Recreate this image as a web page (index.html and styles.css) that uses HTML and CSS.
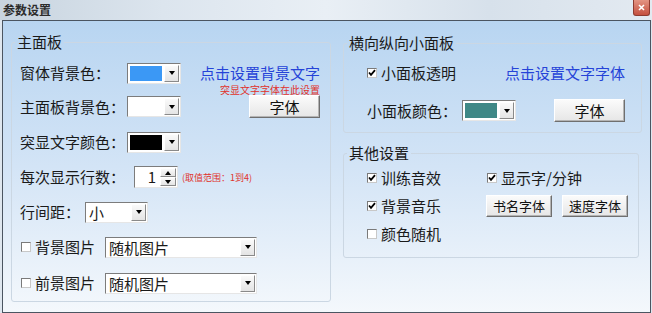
FILE: index.html
```html
<!DOCTYPE html>
<html lang="zh-CN">
<head>
  <meta charset="UTF-8">
  <title>参数设置</title>
  <link rel="stylesheet" href="styles.css">
</head>
<body>
  <div class="window">
    <div class="titlebar">
      <span class="title">参数设置</span>
      <span class="close-btn">
        <svg width="7" height="7" viewBox="0 0 7 7"><path d="M1 1L6 6M6 1L1 6" stroke="#fff" stroke-width="1.6"/></svg>
      </span>
    </div>

    <div class="client">
      <!-- 主面板 -->
      <fieldset class="group group-main">
        <legend>主面板</legend>
        <div class="group-body">
          <div class="row r1">
            <span class="label w-color">窗体背景色：</span>
            <span class="combo combo-color"><span class="swatch swatch-blue"></span><span class="drop"></span></span>
            <span class="link">点击设置背景文字</span>
          </div>
          <div class="note">突显文字字体在此设置</div>
          <div class="row r2">
            <span class="label w-color">主面板背景色：</span>
            <span class="combo combo-color"><span class="swatch swatch-white"></span><span class="drop"></span></span>
            <button class="btn push-right">字体</button>
          </div>
          <div class="row r3">
            <span class="label w-color">突显文字颜色：</span>
            <span class="combo combo-color"><span class="swatch swatch-black"></span><span class="drop"></span></span>
          </div>
          <div class="row r4">
            <span class="label w-lines">每次显示行数：</span>
            <span class="spin">
              <span class="spin-val">1</span>
              <span class="spin-btns"><span class="spin-up"></span><span class="spin-down"></span></span>
            </span>
            <span class="range">(取值范围：1到4)</span>
          </div>
          <div class="row r5">
            <span class="label w-gap">行间距：</span>
            <span class="combo combo-text combo-gap"><span class="val">小</span><span class="drop"></span></span>
          </div>
          <div class="row r6">
            <span class="chk chk-first"></span>
            <span class="label">背景图片</span>
            <span class="combo combo-text combo-pic"><span class="val">随机图片</span><span class="drop"></span></span>
          </div>
          <div class="row r7">
            <span class="chk chk-first"></span>
            <span class="label">前景图片</span>
            <span class="combo combo-text combo-pic"><span class="val">随机图片</span><span class="drop"></span></span>
          </div>
        </div>
      </fieldset>

      <div class="side">
        <!-- 横向纵向小面板 -->
        <fieldset class="group group-small">
          <legend>横向纵向小面板</legend>
          <div class="group-body">
            <div class="row s1">
              <span class="chk checked"><svg width="8" height="8" viewBox="0 0 8 8"><path d="M1 3.5L3 5.8L7 1.2" fill="none" stroke="#000" stroke-width="1.8"/></svg></span>
              <span class="label">小面板透明</span>
              <span class="link push-right">点击设置文字字体</span>
            </div>
            <div class="row s2">
              <span class="label w-small">小面板颜色：</span>
              <span class="combo combo-color"><span class="swatch swatch-teal"></span><span class="drop"></span></span>
              <button class="btn push-right">字体</button>
            </div>
          </div>
        </fieldset>

        <!-- 其他设置 -->
        <fieldset class="group group-other">
          <legend>其他设置</legend>
          <div class="group-body other-grid">
            <div class="cell">
              <span class="chk checked"><svg width="8" height="8" viewBox="0 0 8 8"><path d="M1 3.5L3 5.8L7 1.2" fill="none" stroke="#000" stroke-width="1.8"/></svg></span>
              <span class="label">训练音效</span>
            </div>
            <div class="cell">
              <span class="chk checked"><svg width="8" height="8" viewBox="0 0 8 8"><path d="M1 3.5L3 5.8L7 1.2" fill="none" stroke="#000" stroke-width="1.8"/></svg></span>
              <span class="label">显示字/分钟</span>
            </div>
            <div class="cell">
              <span class="chk checked"><svg width="8" height="8" viewBox="0 0 8 8"><path d="M1 3.5L3 5.8L7 1.2" fill="none" stroke="#000" stroke-width="1.8"/></svg></span>
              <span class="label">背景音乐</span>
            </div>
            <div class="cell btn-pair">
              <button class="btn btn-small">书名字体</button>
              <button class="btn btn-small">速度字体</button>
            </div>
            <div class="cell">
              <span class="chk"></span>
              <span class="label">颜色随机</span>
            </div>
          </div>
        </fieldset>
      </div>
    </div>
  </div>
</body>
</html>
```

FILE: styles.css
```css
* {
  box-sizing: border-box;
}
body {
  margin: 0;
  font-family: "Noto Sans CJK SC", "Liberation Sans", sans-serif;
  background: #dfe7ef;
  color: #1a1a1a;
}
.window {
  width: 652px;
  height: 313px;
  display: flex;
  flex-direction: column;
}
.titlebar {
  height: 20px;
  display: flex;
  justify-content: space-between;
  padding: 0 2px 0 3px;
  background: linear-gradient(90deg, #c8d4df 0%, #dce5ee 25%, #e9eff5 50%, #d7e1eb 75%, #e3eaf1 100%);
}
.title {
  font-size: 12px;
  font-weight: bold;
  line-height: 20px;
  color: #2c2c2c;
}
.close-btn {
  width: 17px;
  height: 16px;
  display: flex;
  align-items: center;
  justify-content: center;
  background: linear-gradient(#e39483, #c5503f);
  border: 1px solid #8e3b30;
  border-top: none;
  border-radius: 0 0 3px 3px;
}
.client {
  flex: 1;
  margin: 0 1px 0 2px;
  border: 1px solid #4b5561;
  background: linear-gradient(#b8d5f1, #d3e4f6 50%, #f4f8fc);
  display: flex;
  gap: 12px;
  padding: 12px 0 0 8px;
}

/* group boxes */
.group {
  margin: 0;
  padding: 0;
  border: 1px solid #cbd7e3;
  border-radius: 3px;
}
.group legend {
  font-size: 15px;
  line-height: 18px;
  padding: 0 2px;
  margin-left: 3px;
}
.group-main {
  width: 320px;
  height: 269px;
}
.group-main .group-body {
  padding: 0 10px 0 8px;
}
.side {
  display: flex;
  flex-direction: column;
  gap: 11px;
  margin-top: 1px;
}
.group-small {
  width: 299px;
  height: 99px;
}
.group-small .group-body {
  padding: 0 16px 0 23px;
}
.group-other {
  width: 294px;
  height: 114px;
}

/* rows */
.row {
  display: flex;
  align-items: center;
  height: 22px;
}
.r1 { margin-top: 11px; }
.r2 { height: 23px; }
.r3, .r4, .r5, .r6 { margin-top: 13px; }
.r7 { margin-top: 14px; }
.s1 { margin-top: 10px; }
.s2 { margin-top: 15px; height: 23px; }

.label {
  font-size: 15px;
  line-height: 20px;
  white-space: nowrap;
}
.w-color { width: 107px; }
.w-lines { width: 114px; }
.w-gap { width: 65px; }
.w-small { width: 95px; }
.push-right {
  margin-left: auto;
}
.link {
  margin-left: auto;
  font-size: 15px;
  line-height: 20px;
  color: #2543d8;
}
.note {
  margin-top: 1px;
  height: 10px;
  font-size: 10px;
  line-height: 10px;
  color: #e0322b;
  text-align: right;
}
.range {
  margin-left: 4px;
  font-size: 9px;
  color: #e0322b;
}

/* combo boxes */
.combo {
  display: flex;
  align-items: center;
  height: 21px;
  padding: 1px;
  background: #fff;
  border: 1px solid;
  border-color: #7c7c7c #e6e6e6 #e6e6e6 #7c7c7c;
}
.combo-color {
  width: 54px;
}
.swatch {
  width: 33px;
  height: 15px;
  margin: 0 2px 0 1px;
}
.swatch-blue { background: #3b98f5; }
.swatch-white { background: #fff; }
.swatch-black { background: #000; }
.swatch-teal { background: #3f8886; }
.drop {
  width: 15px;
  height: 17px;
  margin-left: auto;
  display: flex;
  align-items: center;
  justify-content: center;
  background: linear-gradient(#fafafa, #e4e4e4);
  border: 1px solid;
  border-color: #fff #8a8a8a #8a8a8a #fff;
}
.drop::after {
  content: "";
  border-left: 3px solid transparent;
  border-right: 3px solid transparent;
  border-top: 4px solid #000;
}
.combo-text .val {
  padding-left: 2px;
  font-size: 15px;
  line-height: 17px;
}
.combo-gap { width: 63px; }
.combo-pic {
  width: 152px;
  margin-left: 10px;
}

/* spin box */
.spin {
  display: flex;
  width: 44px;
  height: 22px;
  padding: 1px;
  background: #fff;
  border: 1px solid;
  border-color: #7c7c7c #e6e6e6 #e6e6e6 #7c7c7c;
}
.spin-val {
  flex: 1;
  text-align: right;
  padding-right: 4px;
  font-size: 15px;
  line-height: 18px;
}
.spin-btns {
  width: 16px;
  display: flex;
  flex-direction: column;
}
.spin-up, .spin-down {
  flex: 1;
  display: flex;
  align-items: center;
  justify-content: center;
  background: linear-gradient(#fafafa, #e4e4e4);
  border: 1px solid;
  border-color: #fff #8a8a8a #8a8a8a #fff;
}
.spin-up::after {
  content: "";
  border-left: 3px solid transparent;
  border-right: 3px solid transparent;
  border-bottom: 4px solid #000;
}
.spin-down::after {
  content: "";
  border-left: 3px solid transparent;
  border-right: 3px solid transparent;
  border-top: 4px solid #000;
}

/* check boxes */
.chk {
  width: 10px;
  height: 10px;
  flex: none;
  margin-right: 4px;
  display: flex;
  align-items: center;
  justify-content: center;
  background: #fff;
  border: 1px solid;
  border-color: #7a7a7a #c8c8c8 #c8c8c8 #7a7a7a;
}
.chk-first {
  margin-left: 1px;
}

/* buttons */
.btn {
  width: 71px;
  height: 23px;
  padding: 0;
  font-family: inherit;
  font-size: 15px;
  line-height: 20px;
  color: #111;
  background: linear-gradient(#fbfbfb, #e6e6e6);
  border: 1px solid;
  border-color: #fff #6f6f6f #6f6f6f #fff;
  box-shadow: inset -1px -1px 0 #b4b4b4;
}
.btn-small {
  width: 66px;
  height: 22px;
  font-size: 13px;
}

/* other settings grid */
.other-grid {
  display: grid;
  grid-template-columns: 120px auto;
  grid-template-rows: 20px 22px 20px;
  row-gap: 7px;
  padding: 6px 10px 0 23px;
}
.cell {
  display: flex;
  align-items: center;
}
.btn-pair {
  gap: 10px;
  margin-left: -1px;
}
```
